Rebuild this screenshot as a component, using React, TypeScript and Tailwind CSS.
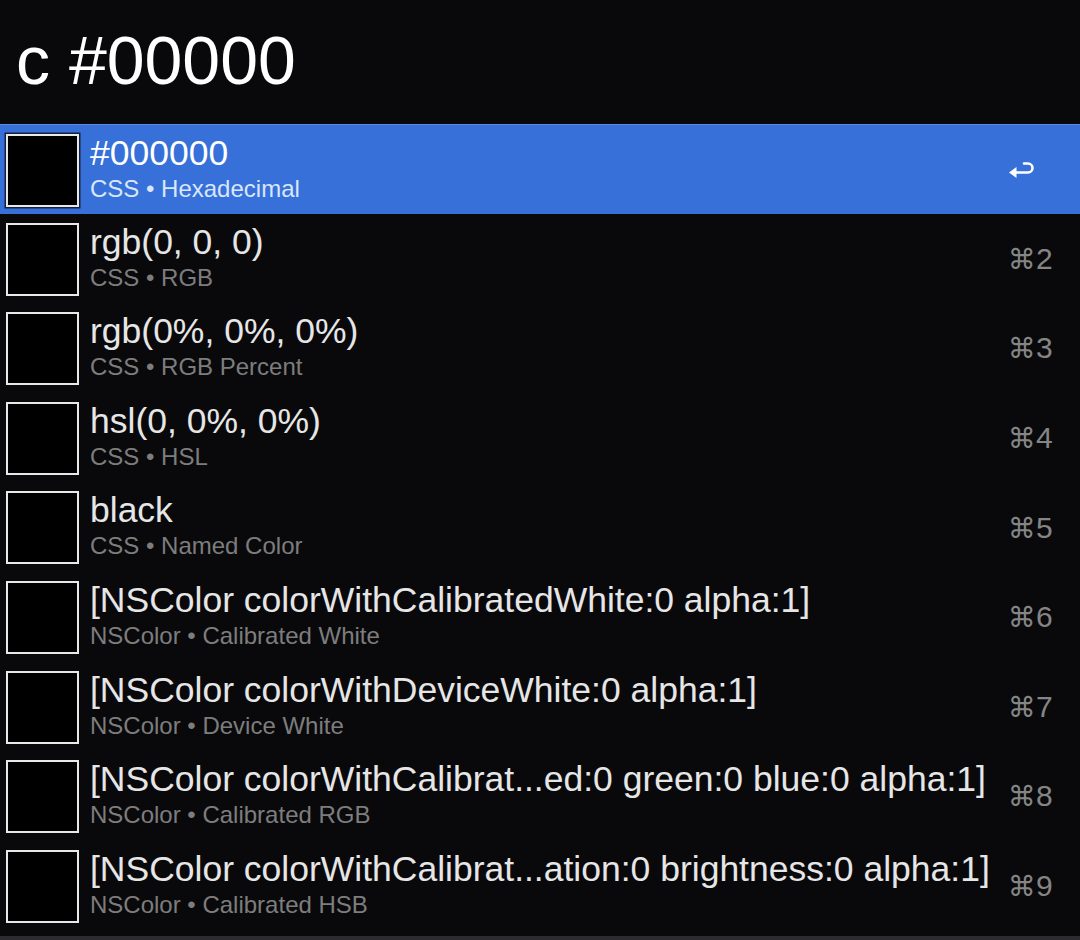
const rows = [
  { title: "#000000", sub: "CSS • Hexadecimal", key: "" },
  { title: "rgb(0, 0, 0)", sub: "CSS • RGB", key: "2" },
  { title: "rgb(0%, 0%, 0%)", sub: "CSS • RGB Percent", key: "3" },
  { title: "hsl(0, 0%, 0%)", sub: "CSS • HSL", key: "4" },
  { title: "black", sub: "CSS • Named Color", key: "5" },
  { title: "[NSColor colorWithCalibratedWhite:0 alpha:1]", sub: "NSColor • Calibrated White", key: "6" },
  { title: "[NSColor colorWithDeviceWhite:0 alpha:1]", sub: "NSColor • Device White", key: "7" },
  { title: "[NSColor colorWithCalibrat...ed:0 green:0 blue:0 alpha:1]", sub: "NSColor • Calibrated RGB", key: "8" },
  { title: "[NSColor colorWithCalibrat...ation:0 brightness:0 alpha:1]", sub: "NSColor • Calibrated HSB", key: "9" },
];

function ReturnIcon() {
  return (
    <svg width="28" height="24" viewBox="0 0 28 24" fill="none">
      <path d="M8 16.5 H21 a4.5 4.5 0 0 0 0 -9 H17" stroke="white" strokeWidth="2.6" strokeLinecap="round" />
      <polygon points="2,16.5 9.5,11 9.5,22" fill="white" />
    </svg>
  );
}

function Row({ title, sub, shortcut, active }: { title: string; sub: string; shortcut: string; active: boolean }) {
  return (
    <div
      className={
        "flex items-start h-[89.6px] " +
        (active ? "bg-[#3670d8] border-t border-[#5a8ae0]" : "")
      }
    >
      <div
        className={
          "ml-[6px] mt-[9px] w-[73px] h-[73px] shrink-0 bg-black border-2 border-[#e8e8e8] " +
          (active ? "shadow-[0_0_0_1.5px_#14203d]" : "")
        }
      />
      <div className="ml-[11px] mt-[11px] flex flex-col gap-[5.5px] min-w-0 flex-1">
        <div className={"text-[35.5px] leading-none whitespace-nowrap " + (active ? "text-white" : "text-[#e6e6e6]")}>
          {title}
        </div>
        <div className={"text-[24px] leading-none whitespace-nowrap " + (active ? "text-[#d9e6fb]" : "text-[#7d7d7d]")}>
          {sub}
        </div>
      </div>
      <div className="self-center w-[72px] shrink-0 flex justify-start">
        {active ? (
          <div className="-ml-[1px] -mt-[2px]">
            <ReturnIcon />
          </div>
        ) : (
          <span className="text-[30px] leading-none text-[#858585] mt-[1px] whitespace-nowrap">
            <span style={{ fontFamily: "'DejaVu Sans', sans-serif" }} className="text-[28px]">⌘</span>
            {shortcut}
          </span>
        )}
      </div>
    </div>
  );
}

export default function App() {
  return (
    <div className="w-[1080px] h-[940px] bg-[#09090b] overflow-hidden font-['Liberation_Sans',Arial,sans-serif]">
      <div className="h-[124px] pl-[16px] pt-[26px]">
        <div className="text-[68px] leading-none text-white">c #00000</div>
      </div>
      <div className="flex flex-col">
        {rows.map((r, i) => (
          <Row key={i} title={r.title} sub={r.sub} shortcut={r.key} active={i === 0} />
        ))}
      </div>
      <div className="mt-[6px] h-[4px] bg-[#2c2c30]" />
    </div>
  );
}
